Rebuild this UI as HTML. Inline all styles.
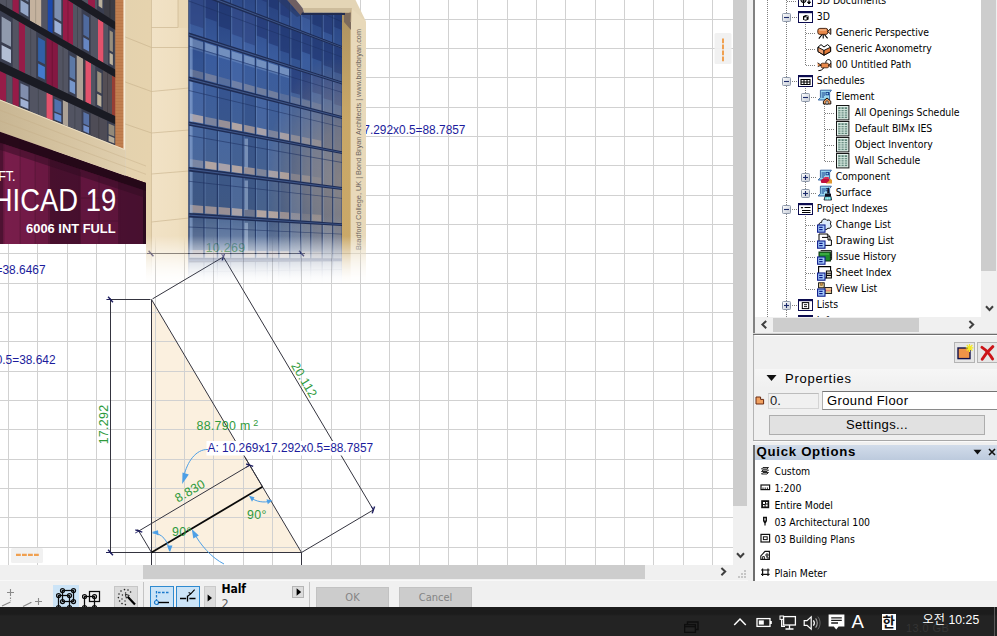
<!DOCTYPE html>
<html lang="en"><head><meta charset="utf-8"><title>ARCHICAD 19</title>
<style>
html,body{margin:0;padding:0;background:#f0f0f0;}
body{width:997px;height:636px;overflow:hidden;font-family:"DejaVu Sans Condensed","Liberation Sans",sans-serif;font-size:11px;color:#000;}
#root{position:relative;width:997px;height:636px;overflow:hidden;background:#f0f0f0;}
.abs{position:absolute;}
svg{display:block;}
#canvas{position:absolute;left:0;top:0;width:733px;height:565px;background:#fff;overflow:hidden;}
#vscroll{position:absolute;left:733px;top:0;width:15px;height:565px;background:#f0f0f0;}
#vscroll .thumb{position:absolute;left:0;top:0;width:14px;height:506px;background:#cdcdcd;}
#hscroll{position:absolute;left:0;top:565px;width:733px;height:16px;background:#f0f0f0;}
#hscroll .thumb{position:absolute;left:143px;top:0px;width:502px;height:14px;background:#cdcdcd;}
#taskbar{position:absolute;left:0;top:607px;width:997px;height:29px;background:linear-gradient(#1c1c1c 0,#1c1c1c 7px,#232323 9px,#232323 100%);}
.tree{position:absolute;left:755px;top:0;width:226px;height:317px;background:#fff;overflow:hidden;}
.trow{position:absolute;left:0;height:16px;line-height:16px;white-space:nowrap;font-size:11px;color:#000;}
.trow{font-size:10.4px;}

</style></head>
<body>
<div id="root">
<div id="canvas"><svg id="cv" width="733" height="565" viewBox="0 0 733 565" font-family="Liberation Sans, sans-serif">
<rect width="100%" height="100%" fill="#fff"/>
<polygon points="151.5,299.5 151.5,552.5 301.5,552.5" fill="#fbf0df"/>
<path d="M8.5 0V565M37.5 0V565M67.5 0V565M96.5 0V565M125.5 0V565M155.5 0V565M184.5 0V565M213.5 0V565M243.5 0V565M272.5 0V565M301.5 0V565M331.5 0V565M360.5 0V565M389.5 0V565M419.5 0V565M448.5 0V565M477.5 0V565M507.5 0V565M536.5 0V565M565.5 0V565M595.5 0V565M624.5 0V565M653.5 0V565M683.5 0V565M712.5 0V565M0 19.5H733M0 48.5H733M0 77.5H733M0 107.5H733M0 136.5H733M0 165.5H733M0 195.5H733M0 224.5H733M0 253.5H733M0 283.5H733M0 312.5H733M0 341.5H733M0 371.5H733M0 400.5H733M0 429.5H733M0 459.5H733M0 488.5H733M0 517.5H733M0 547.5H733" stroke="#d1d1d1" stroke-width="1" fill="none" shape-rendering="crispEdges"/>
<text x="465.5" y="134" text-anchor="end" font-size="11.9" fill="#1c1c9c">17.292x0.5=88.7857</text>
<g stroke="#34343f" stroke-width="1" fill="none">
<path d="M151.5 299.5L301.5 552.5"/>
<path d="M151.5 299.5V565M301.5 552.5V565"/>
<path d="M106 552.5H301.5"/>
<path d="M107 299.5H150.5"/>
<path d="M110.5 298.5V553.5"/>
<path d="M147 253.5H305"/>
<path d="M152.5 298.9L223.4 256.9L373.4 509.9L301.5 552.5"/>
<path d="M138.8 531.0L249.7 465.2"/>
<path d="M151.5 552.5L137.7 529.3M262.5 486.7L245.1 457.5"/>
</g>
<path d="M151.5 552.5L262.5 486.7" stroke="#0a0a0a" stroke-width="1.8"/>
<g transform="translate(110.5 299.5) rotate(0)" stroke="#1c1c60" fill="none"><path d="M-2.4 -2.8L2.4 2.8" stroke-width="1.4"/><path d="M-4.2 0H0" stroke-width="1" stroke-opacity=".8"/></g>
<g transform="translate(110.5 552.5) rotate(0)" stroke="#1c1c60" fill="none"><path d="M-2.4 -2.8L2.4 2.8" stroke-width="1.4"/><path d="M-4.2 0H0" stroke-width="1" stroke-opacity=".8"/></g>
<g transform="translate(151.0 253.5) rotate(0)" stroke="#1c1c60" fill="none"><path d="M-2.4 -2.8L2.4 2.8" stroke-width="1.4"/><path d="M-4.2 0H0" stroke-width="1" stroke-opacity=".8"/></g>
<g transform="translate(301.5 253.5) rotate(0)" stroke="#1c1c60" fill="none"><path d="M-2.4 -2.8L2.4 2.8" stroke-width="1.4"/><path d="M-4.2 0H0" stroke-width="1" stroke-opacity=".8"/></g>
<g transform="translate(223.4 256.9) rotate(59.336918267924595)" stroke="#1c1c60" fill="none"><path d="M-2.4 -2.8L2.4 2.8" stroke-width="1.4"/><path d="M-4.2 0H0" stroke-width="1" stroke-opacity=".8"/></g>
<g transform="translate(373.4 509.9) rotate(59.336918267924595)" stroke="#1c1c60" fill="none"><path d="M-2.4 -2.8L2.4 2.8" stroke-width="1.4"/><path d="M-4.2 0H0" stroke-width="1" stroke-opacity=".8"/></g>
<g transform="translate(138.8 531.0) rotate(-30.663081732075412)" stroke="#1c1c60" fill="none"><path d="M-2.4 -2.8L2.4 2.8" stroke-width="1.4"/><path d="M-4.2 0H0" stroke-width="1" stroke-opacity=".8"/></g>
<g transform="translate(249.7 465.2) rotate(-30.663081732075412)" stroke="#1c1c60" fill="none"><path d="M-2.4 -2.8L2.4 2.8" stroke-width="1.4"/><path d="M-4.2 0H0" stroke-width="1" stroke-opacity=".8"/></g>
<g fill="#2f9a3c" font-size="12.4" letter-spacing=".3">
<text x="225.5" y="251.5" text-anchor="middle">10.269</text>
<text transform="translate(107.5 424.5) rotate(-90)" text-anchor="middle">17.292</text>
<text transform="translate(300.6 382.1) rotate(59.34)" text-anchor="middle">20.112</text>
<text transform="translate(192.1 494.5) rotate(-30.66)" text-anchor="middle">8.830</text>
<text x="196.5" y="429.5">88.790 m <tspan font-size="9" dy="-4" dx="-1">2</tspan></text>
<text x="172" y="536">90°</text>
<text x="247" y="519">90°</text>
</g>
<rect x="206.5" y="441" width="168" height="14.5" fill="#fff"/>
<text x="207.5" y="452" font-size="11.9" fill="#1c1c9c">A: 10.269x17.292x0.5=88.7857</text>
<text x="45.5" y="274" text-anchor="end" font-size="11.9" fill="#1c1c9c">=38.6467</text>
<text x="55.5" y="364" text-anchor="end" font-size="11.9" fill="#1c1c9c">0.5=38.642</text>
<g stroke="#4d9fe6" stroke-width="1" fill="none">
<path d="M208 449.5C196 449 187 462 184 476"/>
<path d="M152.5 533C162 533 168 541 169.5 551"/>
<path d="M250 497C256 502 264 503 271 501"/>
<path d="M193 531C200 545 212 558 224 564"/>
</g>
<g fill="#4d9fe6">
<path d="M182.2 484L182.5 472.5L188.8 474.5Z"/>
<path d="M152 532L158 530.2L158.5 535.5Z"/>
<path d="M170 552.3L167 545.5L172.4 545.5Z"/>
<path d="M249 495.8L254.5 497.2L252 501.8Z"/>
<path d="M272.2 500.6L266.5 499.2L267.8 504.2Z"/>
<path d="M191.8 529L198.8 535.5L193.3 538.6Z"/>
</g>
<defs><linearGradient id="fade" x1="0" y1="0" x2="0" y2="1" gradientUnits="userSpaceOnUse"><stop offset="0" stop-color="#fff"/><stop offset="1" stop-color="#fff"/></linearGradient><linearGradient id="fm" gradientUnits="userSpaceOnUse" x1="0" y1="236" x2="0" y2="284"><stop offset="0" stop-color="#fff"/><stop offset=".167" stop-color="#bfbfbf"/><stop offset=".29" stop-color="#949494"/><stop offset=".417" stop-color="#666"/><stop offset=".5625" stop-color="#3d3d3d"/><stop offset=".708" stop-color="#1f1f1f"/><stop offset=".854" stop-color="#0a0a0a"/><stop offset="1" stop-color="#000"/></linearGradient><mask id="mR" maskUnits="userSpaceOnUse" x="0" y="0" width="400" height="300"><rect x="0" y="0" width="400" height="300" fill="url(#fm)"/></mask><clipPath id="cL"><polygon points="0,0 146,0 146,244 0,244"/></clipPath><clipPath id="cP"><polygon points="0,131.7 146,183.0 146,244 0,244"/></clipPath><clipPath id="cR"><polygon points="146,0 355.5,0 366,21.6 366,300 146,300"/></clipPath><linearGradient id="pur" x1="0" y1="0" x2="1" y2="0"><stop offset="0" stop-color="#6e1a44"/><stop offset=".35" stop-color="#5a1438"/><stop offset=".6" stop-color="#55133a"/><stop offset="1" stop-color="#4a1030"/></linearGradient><linearGradient id="bnd" x1="0" y1="0" x2="1" y2="0"><stop offset="0" stop-color="#c8b693"/><stop offset=".5" stop-color="#d5c3a0"/><stop offset="1" stop-color="#e0cfae"/></linearGradient><linearGradient id="coll" x1="0" y1="0" x2="1" y2="0"><stop offset="0" stop-color="#e4d2ae"/><stop offset="1" stop-color="#e6d3ae"/></linearGradient><linearGradient id="colr" x1="0" y1="0" x2="1" y2="0"><stop offset="0" stop-color="#f1e2c6"/><stop offset=".7" stop-color="#efdfc0"/><stop offset="1" stop-color="#ead8b6"/></linearGradient><linearGradient id="rs" x1="0" y1="0" x2="0" y2="1"><stop offset="0" stop-color="#8a7a5c" stop-opacity=".5"/><stop offset=".4" stop-color="#c9a868" stop-opacity=".4"/><stop offset="1" stop-color="#d0b070" stop-opacity=".3"/></linearGradient><pattern id="brk" width="8.2" height="3" patternUnits="userSpaceOnUse" x="115.5"><rect width="8.2" height="3" fill="#c07f50"/><rect y="2.5" width="8.2" height=".5" fill="#a8683c" opacity=".6"/></pattern></defs><g id="photo"><g clip-path="url(#cL)"><rect x="0" y="0" width="116" height="150" fill="#343642"/><polygon points="60.0,-60.0 88.0,-60.0 88.0,4.3 60.0,-13.6" fill="#525462"/><polygon points="73.6,-60.0 74.4,-60.0 74.4,-4.4 73.6,-4.9" fill="#41434e"/><polygon points="88.0,-60.0 95.0,-60.0 95.0,8.8 88.0,4.3" fill="#961c48"/><polygon points="95.0,-60.0 97.0,-60.0 97.0,10.1 95.0,8.8" fill="#525462"/><polygon points="97.0,-60.0 104.0,-60.0 104.0,14.5 97.0,10.1" fill="#3a3e50"/><polygon points="98.6,-52.9 102.4,-52.6 102.4,-15.9 98.6,-17.4" fill="#978e7d"/><polygon points="98.6,-13.1 102.4,-11.5 102.4,8.4 98.6,6.1" fill="#bab09c"/><polygon points="104.0,-60.0 116.0,-60.0 116.0,22.2 104.0,14.5" fill="#3c3c44"/><polygon points="109.6,-60.0 110.4,-60.0 110.4,18.6 109.6,18.1" fill="#303036"/><polygon points="0.0,-42.5 12.6,-34.6 12.6,10.7 0.0,3.5" fill="#525462"/><polygon points="5.9,-38.8 6.7,-38.3 6.7,7.3 5.9,6.9" fill="#41434e"/><polygon points="12.6,-34.6 18.9,-30.6 18.9,14.3 12.6,10.7" fill="#961c48"/><polygon points="18.9,-30.6 30.0,-23.7 30.0,20.7 18.9,14.3" fill="#3a3e50"/><polygon points="20.5,-25.2 28.4,-20.2 28.4,2.0 20.5,-2.7" fill="#7686a3"/><polygon points="20.5,-0.0 28.4,4.7 28.4,16.7 20.5,12.1" fill="#94a6c8"/><polygon points="30.0,-23.7 41.5,-16.5 41.5,27.3 30.0,20.7" fill="#c4b29e"/><polygon points="35.4,-20.3 36.1,-19.8 36.1,24.2 35.4,23.8" fill="#9c8e7e"/><polygon points="41.5,-16.5 47.8,-12.5 47.8,30.9 41.5,27.3" fill="#525462"/><polygon points="47.8,-12.5 52.8,-9.4 52.8,33.8 47.8,30.9" fill="#1c48ac"/><polygon points="52.8,-9.4 62.9,-3.1 62.9,39.5 52.8,33.8" fill="#3a3e50"/><polygon points="54.4,-4.1 61.3,0.2 61.3,21.5 54.4,17.4" fill="#7d8eaf"/><polygon points="54.4,20.0 61.3,24.1 61.3,35.6 54.4,31.7" fill="#9cb0d6"/><polygon points="62.9,-3.1 73.0,3.2 73.0,45.3 62.9,39.5" fill="#961c48"/><polygon points="67.5,-0.2 68.4,0.3 68.4,42.7 67.5,42.2" fill="#781639"/><polygon points="73.0,3.2 81.8,8.8 81.8,50.4 73.0,45.3" fill="#525462"/><polygon points="77.0,5.8 77.8,6.3 77.8,48.1 77.0,47.6" fill="#41434e"/><polygon points="81.8,8.8 90.6,14.3 90.6,55.4 81.8,50.4" fill="#3a3e50"/><polygon points="83.4,13.9 89.0,17.4 89.0,38.0 83.4,34.7" fill="#4f6a9e"/><polygon points="83.4,37.2 89.0,40.5 89.0,51.6 83.4,48.4" fill="#6686c2"/><polygon points="90.6,14.3 98.0,18.9 98.0,59.7 90.6,55.4" fill="#525462"/><polygon points="98.0,18.9 103.6,22.4 103.6,62.9 98.0,59.7" fill="#e2526c"/><polygon points="103.6,22.4 108.0,25.2 108.0,65.4 103.6,62.9" fill="#525462"/><polygon points="108.0,25.2 114.5,29.2 114.5,69.1 108.0,65.4" fill="#3a3e50"/><polygon points="109.6,30.2 112.9,32.2 112.9,52.2 109.6,50.3" fill="#978e7d"/><polygon points="109.6,52.7 112.9,54.6 112.9,65.4 109.6,63.5" fill="#bab09c"/><polygon points="114.5,29.2 116.0,30.2 116.0,70.0 114.5,69.1" fill="#525462"/><polygon points="0.0,10.5 12.6,17.8 12.6,67.5 0.0,61.5" fill="#3a3e50"/><polygon points="1.6,16.5 11.0,21.9 11.0,46.8 1.6,41.9" fill="#909aad"/><polygon points="1.6,45.0 11.0,49.8 11.0,63.2 1.6,58.7" fill="#b2bed4"/><polygon points="12.6,17.8 18.9,21.4 18.9,70.5 12.6,67.5" fill="#525462"/><polygon points="18.9,21.4 25.0,25.0 25.0,73.4 18.9,70.5" fill="#961c48"/><polygon points="25.0,25.0 36.5,31.6 36.5,78.9 25.0,73.4" fill="#525462"/><polygon points="30.4,28.1 31.1,28.5 31.1,76.3 30.4,75.9" fill="#41434e"/><polygon points="36.5,31.6 46.5,37.4 46.5,83.6 36.5,78.9" fill="#3a3e50"/><polygon points="38.1,37.3 44.9,41.1 44.9,64.3 38.1,60.8" fill="#3160a6"/><polygon points="38.1,63.6 44.9,67.1 44.9,79.6 38.1,76.3" fill="#447acc"/><polygon points="46.5,37.4 57.9,44.0 57.9,89.0 46.5,83.6" fill="#841842"/><polygon points="51.8,40.5 52.6,41.0 52.6,86.5 51.8,86.1" fill="#691334"/><polygon points="57.9,44.0 68.0,49.9 68.0,93.8 57.9,89.0" fill="#525462"/><polygon points="62.6,46.7 63.4,47.2 63.4,91.6 62.6,91.2" fill="#41434e"/><polygon points="68.0,49.9 76.7,54.9 76.7,98.0 68.0,93.8" fill="#3a3e50"/><polygon points="69.6,55.2 75.1,58.3 75.1,79.9 69.6,77.1" fill="#5c78a5"/><polygon points="69.6,79.7 75.1,82.5 75.1,94.2 69.6,91.5" fill="#7696ca"/><polygon points="76.7,54.9 83.0,58.6 83.0,101.0 76.7,98.0" fill="#aca296"/><polygon points="83.0,58.6 85.5,60.0 85.5,102.1 83.0,101.0" fill="#3c3c46"/><polygon points="85.5,60.0 91.0,63.2 91.0,104.8 85.5,102.1" fill="#e2526c"/><polygon points="91.0,63.2 95.6,65.9 95.6,106.9 91.0,104.8" fill="#525462"/><polygon points="95.6,65.9 103.0,70.1 103.0,110.5 95.6,106.9" fill="#3a3e50"/><polygon points="97.2,70.9 101.4,73.3 101.4,93.5 97.2,91.3" fill="#99907d"/><polygon points="97.2,93.8 101.4,95.9 101.4,106.9 97.2,104.8" fill="#bcb29c"/><polygon points="103.0,70.1 112.0,75.4 112.0,114.7 103.0,110.5" fill="#544e54"/><polygon points="107.1,72.5 107.9,73.0 107.9,112.8 107.1,112.4" fill="#433e43"/><polygon points="112.0,75.4 116.0,77.7 116.0,116.6 112.0,114.7" fill="#963e34"/><polygon points="0.0,71.0 6.3,73.9 6.3,102.1 0.0,99.6" fill="#961c48"/><polygon points="6.3,73.9 12.6,76.8 12.6,104.6 6.3,102.1" fill="#525462"/><polygon points="12.6,76.8 18.9,79.7 18.9,107.1 12.6,104.6" fill="#961c48"/><polygon points="18.9,79.7 30.0,84.9 30.0,111.5 18.9,107.1" fill="#3a3e50"/><polygon points="20.5,83.2 28.4,86.8 28.4,100.2 20.5,96.8" fill="#818ead"/><polygon points="20.5,98.5 28.4,101.8 28.4,109.0 20.5,105.8" fill="#a0b0d4"/><polygon points="30.0,84.9 46.5,92.5 46.5,118.1 30.0,111.5" fill="#525462"/><polygon points="37.9,88.5 38.6,88.9 38.6,115.0 37.9,114.7" fill="#41434e"/><polygon points="46.5,92.5 52.8,95.4 52.8,120.6 46.5,118.1" fill="#e2526c"/><polygon points="52.8,95.4 62.9,100.1 62.9,124.6 52.8,120.6" fill="#3a3e50"/><polygon points="54.4,98.7 61.3,101.8 61.3,114.1 54.4,111.2" fill="#4f71ac"/><polygon points="54.4,112.7 61.3,115.6 61.3,122.3 54.4,119.5" fill="#668ed2"/><polygon points="62.9,100.1 68.0,102.4 68.0,126.6 62.9,124.6" fill="#aca296"/><polygon points="68.0,102.4 81.8,108.8 81.8,132.1 68.0,126.6" fill="#525462"/><polygon points="74.5,105.4 75.3,105.8 75.3,129.6 74.5,129.2" fill="#41434e"/><polygon points="81.8,108.8 90.6,112.9 90.6,135.6 81.8,132.1" fill="#3a3e50"/><polygon points="83.4,111.9 89.0,114.4 89.0,125.9 83.4,123.5" fill="#5771a5"/><polygon points="83.4,124.9 89.0,127.2 89.0,133.4 83.4,131.1" fill="#708eca"/><polygon points="90.6,112.9 107.0,120.5 107.0,142.2 90.6,135.6" fill="#4e4c56"/><polygon points="98.4,116.5 99.2,116.9 99.2,139.1 98.4,138.7" fill="#3e3c44"/><polygon points="107.0,120.5 116.0,124.6 116.0,145.7 107.0,142.2" fill="#3a3e50"/><polygon points="108.6,123.4 114.4,126.0 114.4,136.6 108.6,134.2" fill="#92897a"/><polygon points="108.6,135.5 114.4,137.9 114.4,143.6 108.6,141.3" fill="#b4aa98"/><polygon points="60.0,-13.6 116.0,22.2 116.0,30.2 60.0,-4.9" fill="#1a1b23"/><polygon points="0.0,3.5 116.0,70.0 116.0,77.7 0.0,10.5" fill="#1a1b23"/><polygon points="0.0,61.5 116.0,116.6 116.0,124.6 0.0,71.0" fill="#1a1b23"/><rect x="115.5" y="0" width="8.2" height="150" fill="#c07f50"/><rect x="115.5" y="0" width="8.2" height="150" fill="url(#brk)"/><rect x="123.5" y="0" width="2" height="150" fill="#f7ecd6"/><rect x="125.3" y="0" width="26.4" height="300" fill="url(#coll)"/><rect x="151.5" y="0" width="37.3" height="300" fill="url(#colr)"/><rect x="178" y="0" width="10.8" height="28" fill="#e9d7b4"/><g stroke="#c9b48e" stroke-width=".8" fill="none" opacity=".8"><path d="M125.3 37L151.5 47.5L188.8 47.5"/><path d="M125.3 82L151.5 91.5L188.8 88"/><path d="M125.3 124L151.5 133L188.8 130"/><path d="M151.5 174L188.8 171"/><path d="M151.5 222L188.8 218"/><path d="M151.5 27.5L178 27.5V0"/></g><rect x="151.1" y="0" width=".9" height="300" fill="#cdb892" opacity=".8"/><g clip-path="url(#cP)"><rect x="0" y="125" width="146" height="119" fill="url(#pur)"/><rect x="0" y="140" width="3.2" height="104" fill="#4e1232" opacity="1"/><rect x="4.8" y="140" width="14.7" height="104" fill="#7a1e4c" opacity="0.85"/><rect x="21" y="140" width="13.5" height="104" fill="#761c4a" opacity="0.8"/><rect x="36" y="140" width="12" height="104" fill="#701a46" opacity="0.7"/><rect x="50" y="140" width="30" height="104" fill="#400e2a" opacity="0.7"/><rect x="80.5" y="140" width="38.0" height="104" fill="#6c1a44" opacity="0.55"/><rect x="119.5" y="140" width="23.5" height="104" fill="#46102e" opacity="0.6"/><rect x="143" y="140" width="3" height="104" fill="#28091b" opacity="0.85"/><g stroke="#4a1030" stroke-width="1" opacity=".7"><path d="M80.5 172V244M99 176V244M118.5 182V244M80.5 198H118.5M80.5 221H118.5"/></g></g><polygon points="0.0,131.7 151.0,184.7 151.0,192.7 0.0,142.7" fill="#240818" opacity="0.97"/><polygon points="0.0,142.7 151.0,192.7 151.0,199.7 0.0,149.7" fill="#320c22" opacity="0.5"/><polygon points="0,99.6 125.3,149.4 125.3,175.7 0,131.7" fill="url(#bnd)"/><path d="M0 110.2L150 167.6" stroke="#c4ad86" stroke-width=".7" opacity=".6"/><path d="M0 120.8L150 175.8" stroke="#c4ad86" stroke-width=".7" opacity=".6"/><path d="M0 100.1L125.3 149.9" stroke="#f3e6cc" stroke-width="1" opacity=".8"/><g fill="#fff" font-family="Liberation Sans, sans-serif"><text transform="translate(116.2 211) scale(.868 1)" text-anchor="end" font-size="31.6">HICAD 19</text><text x="115.6" y="232.6" text-anchor="end" font-size="12.9" font-weight="bold">6006 INT FULL</text><text transform="translate(15.6 180.8) scale(.9 1)" text-anchor="end" font-size="14">FT.</text></g></g><g clip-path="url(#cR)"><g mask="url(#mR)"><rect x="115.5" y="0" width="8.2" height="150" fill="#c07f50"/><rect x="115.5" y="0" width="8.2" height="150" fill="url(#brk)"/><rect x="123.5" y="0" width="2" height="150" fill="#f7ecd6"/><rect x="125.3" y="0" width="26.4" height="300" fill="url(#coll)"/><rect x="151.5" y="0" width="37.3" height="300" fill="url(#colr)"/><rect x="178" y="0" width="10.8" height="28" fill="#e9d7b4"/><g stroke="#c9b48e" stroke-width=".8" fill="none" opacity=".8"><path d="M125.3 37L151.5 47.5L188.8 47.5"/><path d="M125.3 82L151.5 91.5L188.8 88"/><path d="M125.3 124L151.5 133L188.8 130"/><path d="M151.5 174L188.8 171"/><path d="M151.5 222L188.8 218"/><path d="M151.5 27.5L178 27.5V0"/></g><rect x="151.1" y="0" width=".9" height="300" fill="#cdb892" opacity=".8"/><defs><linearGradient id="gg" x1="0" y1="0" x2="0" y2="1"><stop offset="0" stop-color="#2d4988"/><stop offset=".2" stop-color="#3a5c9e"/><stop offset=".45" stop-color="#416096"/><stop offset=".7" stop-color="#48628c"/><stop offset="1" stop-color="#52688a"/></linearGradient><radialGradient id="gtan" gradientUnits="userSpaceOnUse" cx="340" cy="180" r="125" gradientTransform="translate(340 180) scale(.6 1) translate(-340 -180)"><stop offset="0" stop-color="#a89684" stop-opacity=".66"/><stop offset=".4" stop-color="#a49282" stop-opacity=".52"/><stop offset=".7" stop-color="#a09084" stop-opacity=".26"/><stop offset="1" stop-color="#9a8c84" stop-opacity="0"/></radialGradient><linearGradient id="gwash" x1="0" y1="0" x2="0" y2="1"><stop offset="0" stop-color="#dfe6f0" stop-opacity="0"/><stop offset=".5" stop-color="#dfe6f0" stop-opacity=".3"/><stop offset="1" stop-color="#dfe6f0" stop-opacity=".45"/></linearGradient></defs><rect x="188.8" y="0" width="153.2" height="300" fill="url(#gg)"/><polygon points="189.8,-54.0 203.4,-47.9 203.4,-27.2 189.8,-32.8" fill="#213470" opacity="0.6"/><polygon points="205.0,-47.2 216.8,-42.0 216.8,-18.1 205.0,-22.9" fill="#213470" opacity="0.6"/><polygon points="218.4,-41.3 230.1,-36.1 230.1,-9.1 218.4,-13.8" fill="#213470" opacity="0.6"/><polygon points="217.4,-45.2 230.7,-39.2 230.7,3.1 217.4,-2.0" fill="#6e96d7" opacity="0.14"/><polygon points="231.7,-35.4 242.4,-30.6 242.4,-0.7 231.7,-4.9" fill="#213470" opacity="0.6"/><polygon points="244.0,-29.9 254.9,-25.1 254.9,-5.9 244.0,-10.4" fill="#213470" opacity="0.6"/><polygon points="256.5,-24.4 266.7,-19.9 266.7,2.3 256.5,-1.9" fill="#213470" opacity="0.6"/><polygon points="268.3,-19.2 278.2,-14.8 278.2,10.3 268.3,6.3" fill="#213470" opacity="0.6"/><polygon points="267.3,-22.8 278.8,-17.6 278.8,21.6 267.3,17.2" fill="#14285a" opacity="0.16"/><polygon points="279.8,-14.1 289.2,-9.9 289.2,17.9 279.8,14.2" fill="#213470" opacity="0.6"/><polygon points="290.8,-9.2 300.1,-5.1 300.1,12.8 290.8,8.9" fill="#213470" opacity="0.6"/><polygon points="301.7,-4.3 310.2,-0.6 310.2,20.1 301.7,16.6" fill="#213470" opacity="0.6"/><polygon points="300.7,-7.8 310.8,-3.3 310.8,34.0 300.7,30.1" fill="#6e96d7" opacity="0.14"/><polygon points="311.8,0.1 321.6,4.5 321.6,27.8 311.8,23.8" fill="#213470" opacity="0.6"/><polygon points="310.8,-3.3 322.2,1.8 322.2,38.4 310.8,34.0" fill="#14285a" opacity="0.16"/><polygon points="323.2,5.2 332.1,9.1 332.1,35.0 323.2,31.4" fill="#213470" opacity="0.6"/><polygon points="333.7,9.8 341.6,13.3 341.6,29.9 333.7,26.7" fill="#213470" opacity="0.6"/><polygon points="332.7,6.5 342.2,10.8 342.2,46.0 332.7,42.4" fill="#14285a" opacity="0.16"/><polygon points="189.8,-9.0 203.4,-3.8 203.4,28.2 189.8,23.7" fill="#213470" opacity="0.6"/><polygon points="188.8,-13.0 204.0,-7.1 204.0,37.3 188.8,32.4" fill="#6e96d7" opacity="0.14"/><polygon points="205.0,-3.2 216.8,1.3 216.8,21.8 205.0,17.6" fill="#213470" opacity="0.6"/><polygon points="218.4,1.9 230.1,6.3 230.1,30.0 218.4,25.9" fill="#213470" opacity="0.6"/><polygon points="217.4,-2.0 230.7,3.1 230.7,45.8 217.4,41.6" fill="#14285a" opacity="0.16"/><polygon points="231.7,6.9 242.4,11.0 242.4,37.7 231.7,34.1" fill="#213470" opacity="0.6"/><polygon points="230.7,3.1 243.0,7.9 243.0,49.8 230.7,45.8" fill="#6e96d7" opacity="0.14"/><polygon points="244.0,11.6 254.9,15.7 254.9,45.4 244.0,41.7" fill="#213470" opacity="0.6"/><polygon points="243.0,7.9 255.5,12.7 255.5,53.8 243.0,49.8" fill="#6e96d7" opacity="0.14"/><polygon points="256.5,16.3 266.7,20.2 266.7,39.2 256.5,35.6" fill="#213470" opacity="0.6"/><polygon points="268.3,20.8 278.2,24.6 278.2,46.5 268.3,43.1" fill="#213470" opacity="0.6"/><polygon points="279.8,25.2 289.2,28.8 289.2,53.6 279.8,50.4" fill="#213470" opacity="0.6"/><polygon points="278.8,21.6 289.8,25.9 289.8,64.8 278.8,61.3" fill="#14285a" opacity="0.16"/><polygon points="290.8,29.4 300.1,32.9 300.1,60.5 290.8,57.4" fill="#213470" opacity="0.6"/><polygon points="289.8,25.9 300.7,30.1 300.7,68.3 289.8,64.8" fill="#14285a" opacity="0.16"/><polygon points="301.7,33.5 310.2,36.7 310.2,54.4 301.7,51.5" fill="#213470" opacity="0.6"/><polygon points="311.8,37.3 321.6,41.1 321.6,61.5 311.8,58.1" fill="#213470" opacity="0.6"/><polygon points="310.8,34.0 322.2,38.4 322.2,75.2 310.8,71.6" fill="#14285a" opacity="0.16"/><polygon points="323.2,41.7 332.1,45.1 332.1,68.1 323.2,65.1" fill="#213470" opacity="0.6"/><polygon points="322.2,38.4 332.7,42.4 332.7,78.6 322.2,75.2" fill="#14285a" opacity="0.16"/><polygon points="333.7,45.7 341.6,48.7 341.6,74.3 333.7,71.7" fill="#213470" opacity="0.6"/><polygon points="332.7,42.4 342.2,46.0 342.2,81.6 332.7,78.6" fill="#14285a" opacity="0.16"/><polygon points="190.0,38.1 203.2,42.2 203.2,50.0 190.0,46.0" fill="#96b0d4" opacity="0.62"/><polygon points="190.0,46.0 203.2,50.0 203.2,52.6 190.0,48.6" fill="#7896c8" opacity="0.45"/><polygon points="189.9,68.9 203.3,72.5 203.3,79.6 189.9,76.1" fill="#c4b0a4" opacity="0.3825"/><polygon points="188.8,32.4 204.0,37.3 204.0,80.4 188.8,76.5" fill="#14285a" opacity="0.16"/><polygon points="205.2,42.8 216.6,46.4 216.6,54.0 205.2,50.6" fill="#96b0d4" opacity="0.62"/><polygon points="205.2,50.6 216.6,54.0 216.6,56.6 205.2,53.2" fill="#7896c8" opacity="0.45"/><polygon points="205.1,73.0 216.7,76.1 216.7,83.1 205.1,80.1" fill="#c4b0a4" opacity="0.3825"/><polygon points="218.6,47.0 229.9,50.6 229.9,58.1 218.6,54.6" fill="#96b0d4" opacity="0.62"/><polygon points="218.6,54.6 229.9,58.1 229.9,60.5 218.6,57.2" fill="#7896c8" opacity="0.45"/><polygon points="218.5,76.6 230.0,79.7 230.0,86.5 218.5,83.6" fill="#c4b0a4" opacity="0.2025"/><polygon points="231.9,51.2 242.2,54.4 242.2,61.8 231.9,58.7" fill="#96b0d4" opacity="0.62"/><polygon points="231.9,58.7 242.2,61.8 242.2,64.2 231.9,61.1" fill="#7896c8" opacity="0.45"/><polygon points="231.8,80.2 242.3,83.0 242.3,89.7 231.8,87.0" fill="#c4b0a4" opacity="0.3825"/><polygon points="230.7,45.8 243.0,49.8 243.0,90.5 230.7,87.3" fill="#6e96d7" opacity="0.14"/><polygon points="244.2,55.1 254.7,58.3 254.7,65.5 244.2,62.4" fill="#96b0d4" opacity="0.62"/><polygon points="244.2,62.4 254.7,65.5 254.7,67.9 244.2,64.8" fill="#7896c8" opacity="0.45"/><polygon points="244.1,83.5 254.8,86.4 254.8,93.0 244.1,90.2" fill="#c4b0a4" opacity="0.3825"/><polygon points="256.7,59.0 266.5,62.0 266.5,69.1 256.7,66.2" fill="#96b0d4" opacity="0.62"/><polygon points="256.7,66.2 266.5,69.1 266.5,71.5 256.7,68.5" fill="#7896c8" opacity="0.45"/><polygon points="256.6,86.9 266.6,89.6 266.6,96.0 256.6,93.4" fill="#c4b0a4" opacity="0.3825"/><polygon points="268.5,62.7 278.0,65.7 278.0,72.6 268.5,69.7" fill="#96b0d4" opacity="0.62"/><polygon points="268.5,69.7 278.0,72.6 278.0,74.9 268.5,72.1" fill="#7896c8" opacity="0.45"/><polygon points="268.4,90.0 278.1,92.7 278.1,99.0 268.4,96.5" fill="#c4b0a4" opacity="0.3825"/><polygon points="280.0,66.3 289.0,69.1 289.0,75.9 280.0,73.2" fill="#96b0d4" opacity="0.62"/><polygon points="280.0,73.2 289.0,75.9 289.0,78.2 280.0,75.5" fill="#7896c8" opacity="0.45"/><polygon points="279.9,93.2 289.1,95.6 289.1,101.9 279.9,99.5" fill="#c4b0a4" opacity="0.2025"/><polygon points="290.8,68.2 300.1,71.1 300.1,94.8 290.8,92.2" fill="#213470" opacity="0.6"/><polygon points="290.9,96.1 300.0,98.6 300.0,104.7 290.9,102.4" fill="#c4b0a4" opacity="0.2295"/><polygon points="301.7,71.6 310.2,74.3 310.2,100.6 301.7,98.3" fill="#213470" opacity="0.6"/><polygon points="301.8,99.1 310.1,101.3 310.1,107.3 301.8,105.2" fill="#c4b0a4" opacity="0.2295"/><polygon points="311.8,74.8 321.6,77.9 321.6,94.7 311.8,91.9" fill="#213470" opacity="0.6"/><polygon points="311.9,101.8 321.5,104.4 321.5,110.3 311.9,107.8" fill="#c4b0a4" opacity="0.2295"/><polygon points="310.8,71.6 322.2,75.2 322.2,111.0 310.8,108.1" fill="#6e96d7" opacity="0.14"/><polygon points="323.2,78.4 332.1,81.2 332.1,100.7 323.2,98.2" fill="#213470" opacity="0.6"/><polygon points="322.2,75.2 332.7,78.6 332.7,113.7 322.2,111.0" fill="#6e96d7" opacity="0.14"/><polygon points="333.7,81.7 341.6,84.2 341.6,106.2 333.7,104.0" fill="#213470" opacity="0.6"/><polygon points="332.7,78.6 342.2,81.6 342.2,116.2 332.7,113.7" fill="#6e96d7" opacity="0.14"/><polygon points="189.9,113.5 203.3,116.3 203.3,123.6 189.9,120.9" fill="#c4b0a4" opacity="0.85"/><polygon points="188.8,76.5 204.0,80.4 204.0,124.4 188.8,121.4" fill="#6e96d7" opacity="0.14"/><polygon points="205.1,116.7 216.7,119.1 216.7,126.2 205.1,123.9" fill="#c4b0a4" opacity="0.45"/><polygon points="218.5,119.5 230.0,121.8 230.0,128.8 218.5,126.6" fill="#c4b0a4" opacity="0.85"/><polygon points="217.4,83.9 230.7,87.3 230.7,129.6 217.4,127.0" fill="#14285a" opacity="0.16"/><polygon points="231.8,122.2 242.3,124.4 242.3,131.2 231.8,129.2" fill="#c4b0a4" opacity="0.85"/><polygon points="244.1,124.8 254.8,127.0 254.8,133.7 244.1,131.6" fill="#c4b0a4" opacity="0.85"/><polygon points="243.0,90.5 255.5,93.8 255.5,134.4 243.0,132.0" fill="#14285a" opacity="0.16"/><polygon points="256.6,127.3 266.6,129.4 266.6,136.0 256.6,134.0" fill="#c4b0a4" opacity="0.85"/><polygon points="255.5,93.8 267.3,96.8 267.3,136.7 255.5,134.4" fill="#6e96d7" opacity="0.14"/><polygon points="268.4,129.8 278.1,131.8 278.1,138.3 268.4,136.4" fill="#c4b0a4" opacity="0.45"/><polygon points="279.9,132.2 289.1,134.1 289.1,140.4 279.9,138.6" fill="#c4b0a4" opacity="0.85"/><polygon points="278.8,99.8 289.8,102.6 289.8,141.1 278.8,139.0" fill="#6e96d7" opacity="0.14"/><polygon points="290.9,134.4 300.0,136.3 300.0,142.6 290.9,140.8" fill="#c4b0a4" opacity="0.51"/><polygon points="301.8,136.7 310.1,138.4 310.1,144.5 301.8,142.9" fill="#c4b0a4" opacity="0.51"/><polygon points="300.7,105.5 310.8,108.1 310.8,145.2 300.7,143.3" fill="#6e96d7" opacity="0.14"/><polygon points="311.9,138.8 321.5,140.8 321.5,146.8 311.9,144.9" fill="#c4b0a4" opacity="0.51"/><polygon points="310.8,108.1 322.2,111.0 322.2,147.5 310.8,145.2" fill="#6e96d7" opacity="0.14"/><polygon points="322.2,111.0 332.7,113.7 332.7,149.5 322.2,147.5" fill="#14285a" opacity="0.16"/><polygon points="332.7,113.7 342.2,116.2 342.2,151.4 332.7,149.5" fill="#14285a" opacity="0.16"/><polygon points="189.9,158.9 203.3,160.9 203.3,168.2 189.9,166.5" fill="#c4b0a4" opacity="0.45"/><polygon points="188.8,121.4 204.0,124.4 204.0,169.0 188.8,167.0" fill="#6e96d7" opacity="0.14"/><polygon points="205.1,161.1 216.7,162.8 216.7,170.0 205.1,168.5" fill="#c4b0a4" opacity="0.85"/><polygon points="218.5,163.0 230.0,164.7 230.0,171.8 218.5,170.2" fill="#c4b0a4" opacity="0.85"/><polygon points="217.4,127.0 230.7,129.6 230.7,172.5 217.4,170.8" fill="#6e96d7" opacity="0.14"/><polygon points="231.8,164.9 242.3,166.4 242.3,173.4 231.8,172.0" fill="#c4b0a4" opacity="0.85"/><polygon points="244.1,166.7 254.8,168.2 254.8,175.0 244.1,173.6" fill="#c4b0a4" opacity="0.85"/><polygon points="243.0,132.0 255.5,134.4 255.5,175.7 243.0,174.1" fill="#14285a" opacity="0.16"/><polygon points="256.6,168.5 266.6,169.9 266.6,176.6 256.6,175.3" fill="#c4b0a4" opacity="0.45"/><polygon points="268.4,170.2 278.1,171.5 278.1,178.1 268.4,176.8" fill="#c4b0a4" opacity="0.85"/><polygon points="267.3,136.7 278.8,139.0 278.8,178.8 267.3,177.3" fill="#6e96d7" opacity="0.14"/><polygon points="279.9,171.8 289.1,173.1 289.1,179.6 279.9,178.4" fill="#c4b0a4" opacity="0.85"/><polygon points="290.9,173.4 300.0,174.7 300.0,181.0 290.9,179.8" fill="#c4b0a4" opacity="0.51"/><polygon points="289.8,141.1 300.7,143.3 300.7,181.7 289.8,180.2" fill="#14285a" opacity="0.16"/><polygon points="301.8,174.9 310.1,176.1 310.1,182.3 301.8,181.2" fill="#c4b0a4" opacity="0.51"/><polygon points="311.9,176.4 321.5,177.7 321.5,183.8 311.9,182.6" fill="#c4b0a4" opacity="0.27"/><polygon points="310.8,145.2 322.2,147.5 322.2,184.5 310.8,183.0" fill="#6e96d7" opacity="0.14"/><polygon points="322.2,147.5 332.7,149.5 332.7,185.9 322.2,184.5" fill="#6e96d7" opacity="0.14"/><polygon points="332.7,149.5 342.2,151.4 342.2,187.1 332.7,185.9" fill="#14285a" opacity="0.16"/><polygon points="189.9,204.8 203.3,205.9 203.3,213.3 189.9,212.4" fill="#c4b0a4" opacity="0.85"/><polygon points="188.8,167.0 204.0,169.0 204.0,214.0 188.8,213.0" fill="#14285a" opacity="0.16"/><polygon points="205.1,206.0 216.7,206.9 216.7,214.2 205.1,213.4" fill="#c4b0a4" opacity="0.85"/><polygon points="204.0,169.0 217.4,170.8 217.4,214.9 204.0,214.0" fill="#14285a" opacity="0.16"/><polygon points="218.5,207.0 230.0,207.9 230.0,215.1 218.5,214.3" fill="#c4b0a4" opacity="0.85"/><polygon points="217.4,170.8 230.7,172.5 230.7,215.8 217.4,214.9" fill="#14285a" opacity="0.16"/><polygon points="231.8,208.1 242.3,208.9 242.3,215.9 231.8,215.2" fill="#c4b0a4" opacity="0.85"/><polygon points="230.7,172.5 243.0,174.1 243.0,216.6 230.7,215.8" fill="#6e96d7" opacity="0.14"/><polygon points="244.1,209.0 254.8,209.9 254.8,216.7 244.1,216.0" fill="#c4b0a4" opacity="0.45"/><polygon points="243.0,174.1 255.5,175.7 255.5,217.4 243.0,216.6" fill="#14285a" opacity="0.16"/><polygon points="256.6,210.0 266.6,210.8 266.6,217.5 256.6,216.9" fill="#c4b0a4" opacity="0.85"/><polygon points="268.4,210.9 278.1,211.7 278.1,218.3 268.4,217.7" fill="#c4b0a4" opacity="0.85"/><polygon points="279.9,211.8 289.1,212.5 289.1,219.1 279.9,218.4" fill="#c4b0a4" opacity="0.85"/><polygon points="278.8,178.8 289.8,180.2 289.8,219.7 278.8,219.0" fill="#14285a" opacity="0.16"/><polygon points="290.9,212.7 300.0,213.4 300.0,219.8 290.9,219.2" fill="#c4b0a4" opacity="0.51"/><polygon points="289.8,180.2 300.7,181.7 300.7,220.4 289.8,219.7" fill="#6e96d7" opacity="0.14"/><polygon points="301.8,213.5 310.1,214.2 310.1,220.5 301.8,219.9" fill="#c4b0a4" opacity="0.27"/><polygon points="300.7,181.7 310.8,183.0 310.8,221.1 300.7,220.4" fill="#14285a" opacity="0.16"/><polygon points="311.9,214.3 321.5,215.1 321.5,221.2 311.9,220.6" fill="#c4b0a4" opacity="0.51"/><polygon points="322.2,184.5 332.7,185.9 332.7,222.5 322.2,221.8" fill="#14285a" opacity="0.16"/><polygon points="189.9,249.9 203.3,250.1 203.3,257.4 189.9,257.3" fill="#c4b0a4" opacity="0.85"/><polygon points="188.8,213.0 204.0,214.0 204.0,258.0 188.8,258.0" fill="#14285a" opacity="0.16"/><polygon points="205.1,250.1 216.7,250.3 216.7,257.4 205.1,257.4" fill="#c4b0a4" opacity="0.85"/><polygon points="218.5,250.3 230.0,250.5 230.0,257.5 218.5,257.4" fill="#c4b0a4" opacity="0.85"/><polygon points="217.4,214.9 230.7,215.8 230.7,258.1 217.4,258.1" fill="#6e96d7" opacity="0.14"/><polygon points="231.8,250.5 242.3,250.7 242.3,257.5 231.8,257.5" fill="#c4b0a4" opacity="0.45"/><polygon points="230.7,215.8 243.0,216.6 243.0,258.2 230.7,258.1" fill="#6e96d7" opacity="0.14"/><polygon points="244.1,250.7 254.8,250.8 254.8,257.6 244.1,257.5" fill="#c4b0a4" opacity="0.85"/><polygon points="256.6,250.9 266.6,251.0 266.6,257.6 256.6,257.6" fill="#c4b0a4" opacity="0.85"/><polygon points="255.5,217.4 267.3,218.2 267.3,258.2 255.5,258.2" fill="#6e96d7" opacity="0.14"/><polygon points="268.4,251.0 278.1,251.2 278.1,257.7 268.4,257.6" fill="#c4b0a4" opacity="0.85"/><polygon points="267.3,218.2 278.8,219.0 278.8,258.3 267.3,258.2" fill="#14285a" opacity="0.16"/><polygon points="279.9,251.2 289.1,251.3 289.1,257.7 279.9,257.7" fill="#c4b0a4" opacity="0.85"/><polygon points="290.9,251.4 300.0,251.5 300.0,257.7 290.9,257.7" fill="#c4b0a4" opacity="0.27"/><polygon points="289.8,219.7 300.7,220.4 300.7,258.3 289.8,258.3" fill="#6e96d7" opacity="0.14"/><polygon points="301.8,251.5 310.1,251.6 310.1,257.8 301.8,257.8" fill="#c4b0a4" opacity="0.51"/><polygon points="311.9,251.7 321.5,251.8 321.5,257.8 311.9,257.8" fill="#c4b0a4" opacity="0.51"/><polygon points="310.8,221.1 322.2,221.8 322.2,258.4 310.8,258.3" fill="#14285a" opacity="0.16"/><polygon points="322.2,221.8 332.7,222.5 332.7,258.4 322.2,258.4" fill="#6e96d7" opacity="0.14"/><polygon points="332.7,222.5 342.2,223.2 342.2,258.4 332.7,258.4" fill="#14285a" opacity="0.16"/><polygon points="189.9,294.8 203.3,294.2 203.3,301.5 189.9,302.3" fill="#c4b0a4" opacity="0.85"/><polygon points="205.1,294.1 216.7,293.5 216.7,300.7 205.1,301.4" fill="#c4b0a4" opacity="0.85"/><polygon points="204.0,258.0 217.4,258.1 217.4,301.3 204.0,302.1" fill="#6e96d7" opacity="0.14"/><polygon points="218.5,293.4 230.0,292.9 230.0,299.9 218.5,300.6" fill="#c4b0a4" opacity="0.45"/><polygon points="231.8,292.8 242.3,292.3 242.3,299.1 231.8,299.8" fill="#c4b0a4" opacity="0.85"/><polygon points="244.1,292.2 254.8,291.7 254.8,298.4 244.1,299.0" fill="#c4b0a4" opacity="0.85"/><polygon points="243.0,258.2 255.5,258.2 255.5,299.0 243.0,299.7" fill="#14285a" opacity="0.16"/><polygon points="256.6,291.6 266.6,291.1 266.6,297.7 256.6,298.3" fill="#c4b0a4" opacity="0.85"/><polygon points="255.5,258.2 267.3,258.2 267.3,298.2 255.5,299.0" fill="#14285a" opacity="0.16"/><polygon points="268.4,291.0 278.1,290.5 278.1,297.0 268.4,297.6" fill="#c4b0a4" opacity="0.85"/><polygon points="279.9,290.4 289.1,290.0 289.1,296.3 279.9,296.9" fill="#c4b0a4" opacity="0.45"/><polygon points="278.8,258.3 289.8,258.3 289.8,296.9 278.8,297.5" fill="#14285a" opacity="0.16"/><polygon points="290.9,289.9 300.0,289.4 300.0,295.7 290.9,296.2" fill="#c4b0a4" opacity="0.51"/><polygon points="301.8,289.3 310.1,288.9 310.1,295.1 301.8,295.6" fill="#c4b0a4" opacity="0.51"/><polygon points="311.9,288.8 321.5,288.4 321.5,294.4 311.9,295.0" fill="#c4b0a4" opacity="0.51"/><polygon points="322.2,258.4 332.7,258.4 332.7,294.3 322.2,294.9" fill="#6e96d7" opacity="0.14"/><rect x="188.8" y="60" width="153.2" height="240" fill="url(#gtan)"/><rect x="244.6" y="138.6" width="3.4" height="28.9" fill="#b4c8e4" opacity=".5"/><rect x="244.6" y="180.5" width="3.4" height="29.3" fill="#b4c8e4" opacity=".5"/><rect x="244.6" y="222.8" width="3.4" height="28.4" fill="#b4c8e4" opacity=".5"/><rect x="190" y="34" width="2.6" height="220" fill="#9ab6e0" opacity=".5"/><rect x="188.8" y="215" width="153.2" height="85" fill="url(#gwash)"/><rect x="188.2" y="0" width="1.2" height="300" fill="#1f3362" opacity=".82"/><rect x="189.4" y="0" width="0.9" height="300" fill="#8fb0e0" opacity=".32"/><rect x="203.4" y="0" width="1.2" height="300" fill="#1f3362" opacity=".82"/><rect x="204.6" y="0" width="0.9" height="300" fill="#8fb0e0" opacity=".32"/><rect x="216.8" y="0" width="1.2" height="300" fill="#1f3362" opacity=".82"/><rect x="218.0" y="0" width="0.9" height="300" fill="#8fb0e0" opacity=".32"/><rect x="230.1" y="0" width="1.2" height="300" fill="#1f3362" opacity=".82"/><rect x="231.3" y="0" width="0.9" height="300" fill="#8fb0e0" opacity=".32"/><rect x="242.4" y="0" width="1.2" height="300" fill="#1f3362" opacity=".82"/><rect x="243.6" y="0" width="0.9" height="300" fill="#8fb0e0" opacity=".32"/><rect x="254.9" y="0" width="1.2" height="300" fill="#1f3362" opacity=".82"/><rect x="256.1" y="0" width="0.9" height="300" fill="#8fb0e0" opacity=".32"/><rect x="266.7" y="0" width="1.2" height="300" fill="#1f3362" opacity=".82"/><rect x="267.9" y="0" width="0.9" height="300" fill="#8fb0e0" opacity=".32"/><rect x="278.2" y="0" width="1.2" height="300" fill="#1f3362" opacity=".82"/><rect x="279.4" y="0" width="0.9" height="300" fill="#8fb0e0" opacity=".32"/><rect x="289.2" y="0" width="1.2" height="300" fill="#1f3362" opacity=".82"/><rect x="290.4" y="0" width="0.9" height="300" fill="#8fb0e0" opacity=".32"/><rect x="300.1" y="0" width="1.2" height="300" fill="#1f3362" opacity=".82"/><rect x="301.3" y="0" width="0.9" height="300" fill="#8fb0e0" opacity=".32"/><rect x="310.2" y="0" width="1.2" height="300" fill="#1f3362" opacity=".82"/><rect x="311.4" y="0" width="0.9" height="300" fill="#8fb0e0" opacity=".32"/><rect x="321.6" y="0" width="1.2" height="300" fill="#1f3362" opacity=".82"/><rect x="322.8" y="0" width="0.9" height="300" fill="#8fb0e0" opacity=".32"/><rect x="332.1" y="0" width="1.2" height="300" fill="#1f3362" opacity=".82"/><rect x="333.3" y="0" width="0.9" height="300" fill="#8fb0e0" opacity=".32"/><rect x="341.6" y="0" width="1.2" height="300" fill="#1f3362" opacity=".82"/><rect x="342.8" y="0" width="0.9" height="300" fill="#8fb0e0" opacity=".32"/><polygon points="188.8,-58.0 342.0,10.7 342.0,13.5 188.8,-53.6" fill="#1e2c54"/><polygon points="188.8,-56.4 342.0,11.7 342.0,12.5 188.8,-55.2" fill="#466096" opacity="0.8"/><polygon points="188.8,-44.5 342.0,21.3 342.0,22.2 188.8,-43.6" fill="#1e305e" opacity="0.55"/><polygon points="188.8,-13.0 342.0,46.0 342.0,48.8 188.8,-8.6" fill="#1e2c54"/><polygon points="188.8,-11.4 342.0,47.0 342.0,47.8 188.8,-10.2" fill="#466096" opacity="0.8"/><polygon points="188.8,0.6 342.0,56.7 342.0,57.6 188.8,1.5" fill="#1e305e" opacity="0.55"/><polygon points="188.8,32.4 342.0,81.6 342.0,84.4 188.8,36.8" fill="#1e2c54"/><polygon points="188.8,34.0 342.0,82.6 342.0,83.4 188.8,35.2" fill="#466096" opacity="0.8"/><polygon points="188.8,45.6 342.0,91.9 342.0,92.8 188.8,46.5" fill="#1e305e" opacity="0.55"/><polygon points="188.8,76.5 342.0,116.1 342.0,118.9 188.8,80.9" fill="#1e2c54"/><polygon points="188.8,78.1 342.0,117.1 342.0,117.9 188.8,79.3" fill="#466096" opacity="0.8"/><polygon points="188.8,90.0 342.0,126.7 342.0,127.6 188.8,90.9" fill="#1e305e" opacity="0.55"/><polygon points="188.8,121.4 342.0,151.3 342.0,154.1 188.8,125.8" fill="#1e2c54"/><polygon points="188.8,123.0 342.0,152.3 342.0,153.1 188.8,124.2" fill="#466096" opacity="0.8"/><polygon points="188.8,135.1 342.0,162.1 342.0,163.0 188.8,136.0" fill="#1e305e" opacity="0.55"/><polygon points="188.8,167.0 342.0,187.1 342.0,189.9 188.8,171.4" fill="#1e2c54"/><polygon points="188.8,168.6 342.0,188.1 342.0,188.9 188.8,169.8" fill="#466096" opacity="0.8"/><polygon points="188.8,180.8 342.0,197.9 342.0,198.8 188.8,181.7" fill="#1e305e" opacity="0.55"/><polygon points="188.8,213.0 342.0,223.2 342.0,226.0 188.8,217.4" fill="#1e2c54"/><polygon points="188.8,214.6 342.0,224.2 342.0,224.9 188.8,215.8" fill="#466096" opacity="0.8"/><polygon points="188.8,226.5 342.0,233.7 342.0,234.6 188.8,227.4" fill="#1e305e" opacity="0.55"/><polygon points="188.8,258.0 342.0,258.4 342.0,261.2 188.8,262.4" fill="#1e2c54"/><polygon points="188.8,259.6 342.0,259.4 342.0,260.2 188.8,260.8" fill="#466096" opacity="0.8"/><polygon points="188.8,271.5 342.0,269.0 342.0,269.9 188.8,272.4" fill="#1e305e" opacity="0.55"/><polygon points="188.8,303.0 342.0,293.7 342.0,296.5 188.8,307.4" fill="#1e2c54"/><polygon points="188.8,304.6 342.0,294.7 342.0,295.5 188.8,305.8" fill="#466096" opacity="0.8"/><rect x="342" y="0" width="9" height="300" fill="#c8a666"/><rect x="342" y="0" width="9" height="300" fill="url(#rs)"/><rect x="350.6" y="0" width="15.4" height="300" fill="#e8d9ba"/><polygon points="344,12.6 351,12.6 351,30 344,22" fill="#7c6a5c"/><polygon points="287,0 296,0 302.5,8 304,12.6 300.5,15.5" fill="#6f5f62"/><polygon points="277,0 287,0 300.5,15.5 297,17" fill="#2a3a68" opacity=".7"/><polygon points="302,12.6 345,12.6 345,15 301,15" fill="#222c50"/><polygon points="302.5,8 351.5,8 349.5,12.8 304,12.8" fill="#cdbc9c"/><polygon points="296,0 302.5,8 351.5,8 366,21.6 366,0" fill="#e4d5b6"/><path d="M351.5 8L351 22" stroke="#cbb896" stroke-width=".8"/><text transform="translate(361.3 250) rotate(-90)" font-size="7.9" fill="#6f665e" font-family="Liberation Sans, sans-serif" textLength="221" lengthAdjust="spacingAndGlyphs">Bradford College, UK | Bond Bryan Architects | www.bondbryan.com</text></g></g></g>
<rect x="11" y="548" width="32" height="15" rx="1.5" fill="#f0f0f0" opacity=".93"/>
<path d="M16 554.9H39.2" stroke="#f0a050" stroke-width="2.2" stroke-dasharray="4.8 1.2" fill="none"/>
<rect x="714.5" y="33" width="17" height="31" rx="1.5" fill="#f0f0f0" opacity=".93"/>
<path d="M723 38.4V61.6" stroke="#f0a050" stroke-width="2" stroke-dasharray="4.8 1.2" fill="none"/>
</svg></div><div id="vscroll"><div class="thumb"></div><svg class="abs" style="left:2.5px;top:552px" width="10" height="8"><path d="M1 1.2L4.5 5L8 1.2" stroke="#404040" stroke-width="2" fill="none"/></svg></div><div id="hscroll"><div class="thumb"></div><svg class="abs" style="left:720px;top:2px" width="8" height="10"><path d="M1.4 1L5.2 4.6L1.4 8.2" stroke="#404040" stroke-width="2" fill="none"/></svg></div>
<svg width="0" height="0" style="position:absolute"><defs><linearGradient id="eg" x1="0" y1="0" x2="1" y2="1"><stop offset="0" stop-color="#fff"/><stop offset="1" stop-color="#c6ccd6"/></linearGradient></defs></svg><div class="tree"><div class="abs" style="left:12px;top:0px;width:1px;height:317px;background:repeating-linear-gradient(to bottom,#7f7f7f 0 1px,transparent 1px 2px)"></div><div class="abs" style="left:31px;top:0px;width:1px;height:317px;background:repeating-linear-gradient(to bottom,#7f7f7f 0 1px,transparent 1px 2px)"></div><div class="abs" style="left:50px;top:24px;width:1px;height:42px;background:repeating-linear-gradient(to bottom,#7f7f7f 0 1px,transparent 1px 2px)"></div><div class="abs" style="left:50px;top:88px;width:1px;height:106px;background:repeating-linear-gradient(to bottom,#7f7f7f 0 1px,transparent 1px 2px)"></div><div class="abs" style="left:69px;top:104px;width:1px;height:58px;background:repeating-linear-gradient(to bottom,#7f7f7f 0 1px,transparent 1px 2px)"></div><div class="abs" style="left:50px;top:216px;width:1px;height:74px;background:repeating-linear-gradient(to bottom,#7f7f7f 0 1px,transparent 1px 2px)"></div><div class="abs" style="left:32px;top:1px;width:10px;height:1px;background:repeating-linear-gradient(to right,#7f7f7f 0 1px,transparent 1px 2px)"></div><svg class="abs" style="left:43px;top:-7px" width="16" height="16" viewBox="0 0 16 16" ><rect x="0.5" y="2.5" width="14" height="11" fill="#fff" stroke="#0b0b4f"/><rect x="0" y="2" width="15" height="2.2" fill="#0b0b4f"/><circle cx="5.5" cy="7" r="2.6" fill="#888" stroke="#000"/><path d="M5.5 4V13M11 4V10M9.5 9L11 11L12.5 9Z" stroke="#000" fill="#000" stroke-width="1"/></svg><div class="trow" style="left:61.8px;top:-8px">3D Documents</div><div class="abs" style="left:37px;top:17px;width:5px;height:1px;background:repeating-linear-gradient(to right,#7f7f7f 0 1px,transparent 1px 2px)"></div><svg class="abs" style="left:27px;top:13px" width="9" height="9" viewBox="0 0 9 9" ><rect x="0.5" y="0.5" width="8" height="8" rx="1" fill="url(#eg)" stroke="#8e99ab"/><path d="M2 4.5H7" stroke="#1c2a6a" stroke-width="1.1"/></svg><svg class="abs" style="left:43px;top:9px" width="16" height="16" viewBox="0 0 16 16" ><rect x="0.5" y="2.5" width="14" height="11" fill="#fff" stroke="#0b0b4f"/><rect x="0" y="2" width="15" height="2.2" fill="#0b0b4f"/><path d="M5 7.2L7.6 6L10.6 6.8V10.4L7.8 11.8L5 10.8Z" fill="#000"/><path d="M6.2 8.4H8.6V10.6H6.2Z" fill="#fff"/><path d="M7.4 8.2L10.4 7" stroke="#fff" stroke-width=".7"/></svg><div class="trow" style="left:61.8px;top:8px">3D</div><div class="abs" style="left:51px;top:33px;width:10px;height:1px;background:repeating-linear-gradient(to right,#7f7f7f 0 1px,transparent 1px 2px)"></div><svg class="abs" style="left:62px;top:25px" width="16" height="16" viewBox="0 0 16 16" ><path d="M5.5 9L1.8 13.6M6.2 9V13.4M7 9L10.6 13.4" stroke="#000" stroke-width="1.1" fill="none"/><rect x="0.8" y="3.4" width="10" height="6" rx="2" fill="#e8884a" stroke="#3a1a08" stroke-width=".9"/><path d="M10.6 6.4L13.8 3.6V9.4Z" fill="#f0b088" stroke="#000" stroke-width=".9"/><path d="M2.2 5H9" stroke="#f8c8a0" stroke-width="1"/></svg><div class="trow" style="left:80.8px;top:24px">Generic Perspective</div><div class="abs" style="left:51px;top:49px;width:10px;height:1px;background:repeating-linear-gradient(to right,#7f7f7f 0 1px,transparent 1px 2px)"></div><svg class="abs" style="left:62px;top:41px" width="16" height="16" viewBox="0 0 16 16" ><path d="M1 6.2L4 3.6L7 6L10.6 3.6L13.6 6.2V10.6L7 14.2L1 10.6Z" fill="#fff" stroke="#000" stroke-width="1"/><path d="M1 6.2L7 9.4V14.2L1 10.6Z" fill="#f0a070" stroke="#000" stroke-width=".9"/><path d="M7 9.4L13.6 6.2V10.6L7 14.2Z" fill="#e07838" stroke="#000" stroke-width=".9"/></svg><div class="trow" style="left:80.8px;top:40px">Generic Axonometry</div><div class="abs" style="left:51px;top:65px;width:10px;height:1px;background:repeating-linear-gradient(to right,#7f7f7f 0 1px,transparent 1px 2px)"></div><svg class="abs" style="left:62px;top:57px" width="16" height="16" viewBox="0 0 16 16" ><path d="M9 6.4C8 3 12 1.2 13.6 3.8C14.2 5 13.8 6 13.6 7" stroke="#000" stroke-width="1" fill="none"/><rect x="4" y="6.2" width="7.6" height="4.6" rx="1.4" fill="#e8884a" stroke="#3a1a08" stroke-width=".8"/><path d="M0.6 5.8L4.2 8.2L0.8 9.6M11.6 8L14 6.4V10.6Z" fill="#e8884a" stroke="#000" stroke-width=".8"/><path d="M6.6 10.8C6 12.6 3.4 13.8 1.4 13.6" stroke="#000" stroke-width="1" fill="none"/></svg><div class="trow" style="left:80.8px;top:56px">00 Untitled Path</div><div class="abs" style="left:37px;top:81px;width:5px;height:1px;background:repeating-linear-gradient(to right,#7f7f7f 0 1px,transparent 1px 2px)"></div><svg class="abs" style="left:27px;top:77px" width="9" height="9" viewBox="0 0 9 9" ><rect x="0.5" y="0.5" width="8" height="8" rx="1" fill="url(#eg)" stroke="#8e99ab"/><path d="M2 4.5H7" stroke="#1c2a6a" stroke-width="1.1"/></svg><svg class="abs" style="left:43px;top:73px" width="16" height="16" viewBox="0 0 16 16" ><rect x="0.5" y="2.5" width="14" height="11" fill="#fff" stroke="#0b0b4f"/><rect x="0" y="2" width="15" height="2.2" fill="#0b0b4f"/><path d="M3 6.5H12V11.5H3ZM3 9H12M6 6.5V11.5M9 6.5V11.5" stroke="#000" stroke-width="1.1" fill="none"/></svg><div class="trow" style="left:61.8px;top:72px">Schedules</div><div class="abs" style="left:56px;top:97px;width:5px;height:1px;background:repeating-linear-gradient(to right,#7f7f7f 0 1px,transparent 1px 2px)"></div><svg class="abs" style="left:46px;top:93px" width="9" height="9" viewBox="0 0 9 9" ><rect x="0.5" y="0.5" width="8" height="8" rx="1" fill="url(#eg)" stroke="#8e99ab"/><path d="M2 4.5H7" stroke="#1c2a6a" stroke-width="1.1"/></svg><svg class="abs" style="left:62px;top:89px" width="16" height="16" viewBox="0 0 16 16" ><path d="M3.4 1.2H14.4L12.6 3.6V11H1.2L3.4 8.6Z" fill="#9ad8f0" stroke="#2a5a9a" stroke-width=".9"/><path d="M4.6 4H8M4.6 6H8M4.6 8H7" stroke="#123a8a" stroke-width="1"/><rect x="9" y="3.4" width="2.6" height="2.4" fill="none" stroke="#123a8a" stroke-width=".9"/><path d="M6.4 12.2L10 9L13.8 12.2V15H6.4Z" fill="#f0a060" stroke="#000" stroke-width=".9"/><path d="M9 12H11V15H9Z" fill="#fff" stroke="#000" stroke-width=".6"/></svg><div class="trow" style="left:80.8px;top:88px">Element</div><div class="abs" style="left:70px;top:113px;width:10px;height:1px;background:repeating-linear-gradient(to right,#7f7f7f 0 1px,transparent 1px 2px)"></div><svg class="abs" style="left:81px;top:105px" width="14" height="16" viewBox="0 0 14 16" ><rect x="0.5" y="0.5" width="12.4" height="14.4" fill="#e4f2ec" stroke="#161616"/><rect x="2.2" y="2.2" width="9" height="11" fill="#5f8579"/><path d="M5 2.2V13.2M8.2 2.2V13.2M2.2 4.6H11.2M2.2 6.8H11.2M2.2 9H11.2M2.2 11.2H11.2" stroke="#d6e8e0" stroke-width="1"/></svg><div class="trow" style="left:99.8px;top:104px">All Openings Schedule</div><div class="abs" style="left:70px;top:129px;width:10px;height:1px;background:repeating-linear-gradient(to right,#7f7f7f 0 1px,transparent 1px 2px)"></div><svg class="abs" style="left:81px;top:121px" width="14" height="16" viewBox="0 0 14 16" ><rect x="0.5" y="0.5" width="12.4" height="14.4" fill="#e4f2ec" stroke="#161616"/><rect x="2.2" y="2.2" width="9" height="11" fill="#5f8579"/><path d="M5 2.2V13.2M8.2 2.2V13.2M2.2 4.6H11.2M2.2 6.8H11.2M2.2 9H11.2M2.2 11.2H11.2" stroke="#d6e8e0" stroke-width="1"/></svg><div class="trow" style="left:99.8px;top:120px">Default BIMx IES</div><div class="abs" style="left:70px;top:145px;width:10px;height:1px;background:repeating-linear-gradient(to right,#7f7f7f 0 1px,transparent 1px 2px)"></div><svg class="abs" style="left:81px;top:137px" width="14" height="16" viewBox="0 0 14 16" ><rect x="0.5" y="0.5" width="12.4" height="14.4" fill="#e4f2ec" stroke="#161616"/><rect x="2.2" y="2.2" width="9" height="11" fill="#5f8579"/><path d="M5 2.2V13.2M8.2 2.2V13.2M2.2 4.6H11.2M2.2 6.8H11.2M2.2 9H11.2M2.2 11.2H11.2" stroke="#d6e8e0" stroke-width="1"/></svg><div class="trow" style="left:99.8px;top:136px">Object Inventory</div><div class="abs" style="left:70px;top:161px;width:10px;height:1px;background:repeating-linear-gradient(to right,#7f7f7f 0 1px,transparent 1px 2px)"></div><svg class="abs" style="left:81px;top:153px" width="14" height="16" viewBox="0 0 14 16" ><rect x="0.5" y="0.5" width="12.4" height="14.4" fill="#e4f2ec" stroke="#161616"/><rect x="2.2" y="2.2" width="9" height="11" fill="#5f8579"/><path d="M5 2.2V13.2M8.2 2.2V13.2M2.2 4.6H11.2M2.2 6.8H11.2M2.2 9H11.2M2.2 11.2H11.2" stroke="#d6e8e0" stroke-width="1"/></svg><div class="trow" style="left:99.8px;top:152px">Wall Schedule</div><div class="abs" style="left:56px;top:177px;width:5px;height:1px;background:repeating-linear-gradient(to right,#7f7f7f 0 1px,transparent 1px 2px)"></div><svg class="abs" style="left:46px;top:173px" width="9" height="9" viewBox="0 0 9 9" ><rect x="0.5" y="0.5" width="8" height="8" rx="1" fill="url(#eg)" stroke="#8e99ab"/><path d="M2 4.5H7" stroke="#1c2a6a" stroke-width="1.1"/><path d="M4.5 2V7" stroke="#1c2a6a" stroke-width="1.1"/></svg><svg class="abs" style="left:62px;top:169px" width="16" height="16" viewBox="0 0 16 16" ><path d="M3.4 1.2H14.4L12.6 3.6V11H1.2L3.4 8.6Z" fill="#9ad8f0" stroke="#2a5a9a" stroke-width=".9"/><path d="M4.6 4H8M4.6 6H8M4.6 8H7" stroke="#123a8a" stroke-width="1"/><rect x="9" y="3.4" width="2.6" height="2.4" fill="none" stroke="#123a8a" stroke-width=".9"/><path d="M9 13.8L13 9.6L15 11V14.6H9Z" fill="#e09830"/><path d="M3.6 11.4L6.4 9.2H11.6L12.4 11.4L9.6 14H4.4Z" fill="#c0103c"/><path d="M6 9.6L8 8H11.6L12 9.8Z" fill="#e02850"/></svg><div class="trow" style="left:80.8px;top:168px">Component</div><div class="abs" style="left:56px;top:193px;width:5px;height:1px;background:repeating-linear-gradient(to right,#7f7f7f 0 1px,transparent 1px 2px)"></div><svg class="abs" style="left:46px;top:189px" width="9" height="9" viewBox="0 0 9 9" ><rect x="0.5" y="0.5" width="8" height="8" rx="1" fill="url(#eg)" stroke="#8e99ab"/><path d="M2 4.5H7" stroke="#1c2a6a" stroke-width="1.1"/><path d="M4.5 2V7" stroke="#1c2a6a" stroke-width="1.1"/></svg><svg class="abs" style="left:62px;top:185px" width="16" height="16" viewBox="0 0 16 16" ><path d="M3.4 1.2H14.4L12.6 3.6V11H1.2L3.4 8.6Z" fill="#9ad8f0" stroke="#2a5a9a" stroke-width=".9"/><path d="M4.6 4H8M4.6 6H8M4.6 8H7" stroke="#123a8a" stroke-width="1"/><rect x="9" y="3.4" width="2.6" height="2.4" fill="none" stroke="#123a8a" stroke-width=".9"/><path d="M10.4 3.2L11.8 2.6L12.4 8.6H10.2Z" fill="#101020"/><path d="M8 8.6H14V11.4H8Z" fill="#101020"/><path d="M7 15L8 11.4H14L14.6 15Z" fill="#50d0d8" stroke="#101020" stroke-width=".8"/><path d="M9 12.4V14.6M10.6 12.4V14.6M12.2 12.4V14.6" stroke="#e8ffff" stroke-width=".7"/></svg><div class="trow" style="left:80.8px;top:184px">Surface</div><div class="abs" style="left:37px;top:209px;width:5px;height:1px;background:repeating-linear-gradient(to right,#7f7f7f 0 1px,transparent 1px 2px)"></div><svg class="abs" style="left:27px;top:205px" width="9" height="9" viewBox="0 0 9 9" ><rect x="0.5" y="0.5" width="8" height="8" rx="1" fill="url(#eg)" stroke="#8e99ab"/><path d="M2 4.5H7" stroke="#1c2a6a" stroke-width="1.1"/></svg><svg class="abs" style="left:43px;top:201px" width="16" height="16" viewBox="0 0 16 16" ><rect x="0.5" y="2.5" width="14" height="11" fill="#fff" stroke="#0b0b4f"/><rect x="0" y="2" width="15" height="2.2" fill="#0b0b4f"/><path d="M2.6 6L5.4 6L4 7.8Z" fill="#000"/><path d="M6.5 6.5H12.5M4 9.5H12.5M4 11.5H12.5" stroke="#000" stroke-width="1.1"/></svg><div class="trow" style="left:61.8px;top:200px">Project Indexes</div><div class="abs" style="left:51px;top:225px;width:10px;height:1px;background:repeating-linear-gradient(to right,#7f7f7f 0 1px,transparent 1px 2px)"></div><svg class="abs" style="left:62px;top:217px" width="16" height="16" viewBox="0 0 16 16" ><path d="M3 10C0.8 8 2.4 5 4.6 5.4C4.6 2 8.4 1 10 3.4C12.4 2 15 4.6 13.2 7C15.4 9 13.4 12 11 11.2C10 13 7 13 6 11.6Z" fill="#dceafc" stroke="#000" stroke-width="1"/><rect x="0.6" y="8" width="7.4" height="7.2" fill="#a4c8f8" stroke="#0c1c8c" stroke-width="1.1"/><path d="M2.2 10.4H5.6M2.2 12.6H5.6" stroke="#0c1c8c" stroke-width="1.2"/></svg><div class="trow" style="left:80.8px;top:216px">Change List</div><div class="abs" style="left:51px;top:241px;width:10px;height:1px;background:repeating-linear-gradient(to right,#7f7f7f 0 1px,transparent 1px 2px)"></div><svg class="abs" style="left:62px;top:233px" width="16" height="16" viewBox="0 0 16 16" ><path d="M2 1H10.4L13 3.6V8" fill="none" stroke="#000" stroke-width="1"/><path d="M2 1V8" stroke="#000"/><path d="M5 4.4H11V7H14.4V12.4H8" fill="#fff" stroke="#000" stroke-width="1"/><path d="M10.4 1V3.6H13" fill="none" stroke="#000" stroke-width=".8"/><rect x="0.6" y="8" width="7.4" height="7.2" fill="#a4c8f8" stroke="#0c1c8c" stroke-width="1.1"/><path d="M2.2 10.4H5.6M2.2 12.6H5.6" stroke="#0c1c8c" stroke-width="1.2"/></svg><div class="trow" style="left:80.8px;top:232px">Drawing List</div><div class="abs" style="left:51px;top:257px;width:10px;height:1px;background:repeating-linear-gradient(to right,#7f7f7f 0 1px,transparent 1px 2px)"></div><svg class="abs" style="left:62px;top:249px" width="16" height="16" viewBox="0 0 16 16" ><path d="M3.6 1.6H14.6V10.6H13.4" fill="#fff" stroke="#000" stroke-width=".9"/><rect x="2" y="3" width="11.4" height="9" fill="#1f8a2c" stroke="#0a300c" stroke-width="1"/><path d="M3 5H12" stroke="#4cc050" stroke-width="1.2"/><path d="M13.4 6H14.6M13.4 8.4H14.6" stroke="#000" stroke-width=".8"/><rect x="0.6" y="8" width="7.4" height="7.2" fill="#a4c8f8" stroke="#0c1c8c" stroke-width="1.1"/><path d="M2.2 10.4H5.6M2.2 12.6H5.6" stroke="#0c1c8c" stroke-width="1.2"/></svg><div class="trow" style="left:80.8px;top:248px">Issue History</div><div class="abs" style="left:51px;top:273px;width:10px;height:1px;background:repeating-linear-gradient(to right,#7f7f7f 0 1px,transparent 1px 2px)"></div><svg class="abs" style="left:62px;top:265px" width="16" height="16" viewBox="0 0 16 16" ><path d="M1.6 8V1.6H13.6V6" fill="#fff" stroke="#000" stroke-width="1.1"/><rect x="9.4" y="6" width="5" height="7" fill="#f4ecd8" stroke="#000" stroke-width="1"/><path d="M9.4 8.2H14.4M9.4 10.4H14.4" stroke="#000" stroke-width="1.1"/><path d="M8 13H9.4" stroke="#000"/><rect x="0.6" y="8" width="7.4" height="7.2" fill="#a4c8f8" stroke="#0c1c8c" stroke-width="1.1"/><path d="M2.2 10.4H5.6M2.2 12.6H5.6" stroke="#0c1c8c" stroke-width="1.2"/></svg><div class="trow" style="left:80.8px;top:264px">Sheet Index</div><div class="abs" style="left:51px;top:289px;width:10px;height:1px;background:repeating-linear-gradient(to right,#7f7f7f 0 1px,transparent 1px 2px)"></div><svg class="abs" style="left:62px;top:281px" width="16" height="16" viewBox="0 0 16 16" ><rect x="1.6" y="1.8" width="5.6" height="5" fill="#f0d8a0" stroke="#000" stroke-width=".9"/><path d="M3.4 1.8V4.4H5.4V1.8" fill="#d09040" stroke="#604020" stroke-width=".5"/><rect x="8" y="6.6" width="6.6" height="5.8" fill="#e88870" stroke="#000" stroke-width=".9"/><path d="M8.4 7H14.2V9H8.4Z" fill="#f0c090"/><path d="M8.4 10.4H14.2V12H8.4Z" fill="#c8d890" opacity=".8"/><rect x="0.6" y="8" width="7.4" height="7.2" fill="#a4c8f8" stroke="#0c1c8c" stroke-width="1.1"/><path d="M2.2 10.4H5.6M2.2 12.6H5.6" stroke="#0c1c8c" stroke-width="1.2"/></svg><div class="trow" style="left:80.8px;top:280px">View List</div><div class="abs" style="left:37px;top:305px;width:5px;height:1px;background:repeating-linear-gradient(to right,#7f7f7f 0 1px,transparent 1px 2px)"></div><svg class="abs" style="left:27px;top:301px" width="9" height="9" viewBox="0 0 9 9" ><rect x="0.5" y="0.5" width="8" height="8" rx="1" fill="url(#eg)" stroke="#8e99ab"/><path d="M2 4.5H7" stroke="#1c2a6a" stroke-width="1.1"/><path d="M4.5 2V7" stroke="#1c2a6a" stroke-width="1.1"/></svg><svg class="abs" style="left:43px;top:297px" width="16" height="16" viewBox="0 0 16 16" ><rect x="0.5" y="2.5" width="14" height="11" fill="#fff" stroke="#0b0b4f"/><rect x="0" y="2" width="15" height="2.2" fill="#0b0b4f"/><rect x="4.3" y="5.6" width="6.4" height="6" fill="#fff" stroke="#000" stroke-width="1"/><path d="M6 7.7H9M6 9.6H9" stroke="#000" stroke-width=".9"/></svg><div class="trow" style="left:61.8px;top:296px">Lists</div><div class="abs" style="left:32px;top:321px;width:10px;height:1px;background:repeating-linear-gradient(to right,#7f7f7f 0 1px,transparent 1px 2px)"></div><svg class="abs" style="left:43px;top:313px" width="16" height="16" viewBox="0 0 16 16" ><rect x="0.5" y="2.5" width="14" height="11" fill="#fff" stroke="#0b0b4f"/><rect x="0" y="2" width="15" height="2.2" fill="#0b0b4f"/><path d="M2.6 6L5.4 6L4 7.8Z" fill="#000"/><path d="M6.5 6.5H12.5M4 9.5H12.5M4 11.5H12.5" stroke="#000" stroke-width="1.1"/></svg><div class="trow" style="left:61.8px;top:312px">Info</div></div><div class="abs" style="left:753px;top:0;width:2px;height:334px;background:#828282"></div><div class="abs" style="left:748px;top:0;width:5px;height:581px;background:#f0f0f0"></div><div class="abs" style="left:981px;top:0;width:16px;height:317px;background:#f0f0f0"><div class="abs" style="left:0;top:0;width:15px;height:271px;background:#cdcdcd"></div><svg class="abs" style="left:3.5px;top:304.5px" width="10" height="8"><path d="M1 1.2L4.5 5L8 1.2" stroke="#404040" stroke-width="2" fill="none"/></svg></div><div class="abs" style="left:755px;top:317px;width:242px;height:16px;background:#f0f0f0"><div class="abs" style="left:18px;top:1px;width:146px;height:14px;background:#cdcdcd"></div><svg class="abs" style="left:5px;top:3px" width="8" height="10"><path d="M6.2 1L2.4 4.6L6.2 8.2" stroke="#404040" stroke-width="2" fill="none"/></svg><svg class="abs" style="left:213px;top:3px" width="8" height="10"><path d="M1.4 1L5.2 4.6L1.4 8.2" stroke="#404040" stroke-width="2" fill="none"/></svg></div><div class="abs" style="left:753px;top:333px;width:244px;height:1px;background:#cfcfcf"></div><div class="abs" style="left:753px;top:334px;width:244px;height:1px;background:#6e6e6e"></div><div class="abs" style="left:755px;top:335px;width:242px;height:1px;background:#fff"></div><div class="abs" style="left:753px;top:335px;width:1px;height:106px;background:#b4b4b4"></div><div class="abs" style="left:753px;top:440px;width:244px;height:1px;background:#a8a8a8"></div><div class="abs" style="left:754px;top:441px;width:243px;height:1px;background:#fafafa"></div><div class="abs" style="left:954px;top:342px;width:21px;height:21px;border:1px solid #b4b4b4;background:#e6e6e6;box-sizing:border-box"></div><svg class="abs" style="left:956px;top:343px" width="18" height="18" viewBox="0 0 18 18" ><rect x="2" y="5" width="12" height="10.6" fill="#f09448" stroke="#10104a" stroke-width="1.4"/><path d="M13.5 1V9M9.8 4.8H17.4M10.8 2L16.4 7.6M16.4 2L10.8 7.6" stroke="#f4ea20" stroke-width="1.2"/></svg><div class="abs" style="left:977px;top:342px;width:22px;height:21px;border:1px solid #b4b4b4;background:#e6e6e6;box-sizing:border-box"></div><svg class="abs" style="left:980px;top:345px" width="16" height="16" viewBox="0 0 16 16" ><path d="M2 2.4C6 5 10 9.6 12.6 14M12.8 1.6C9 5 5 9.6 2.2 14.2" stroke="#cc1418" stroke-width="2.9" fill="none" stroke-linecap="round"/></svg><div class="abs" style="left:755px;top:369px;width:242px;height:19px;background:linear-gradient(#f6f6f6,#f0f0f0)"></div><svg class="abs" style="left:766px;top:374px" width="11" height="8" viewBox="0 0 11 8" ><path d="M0.5 1H10.5L5.5 7Z" fill="#111"/></svg><div class="abs" style="left:785px;top:370.6px;font:13px/16px 'Liberation Sans',sans-serif;letter-spacing:.75px">Properties</div><svg class="abs" style="left:755px;top:395px" width="10" height="10" viewBox="0 0 10 10" ><path d="M1 2H5.6V4.4H8.6V9H1Z" fill="#f0a060" stroke="#6a2a10" stroke-width="1"/></svg><div class="abs" style="left:768px;top:393px;width:51px;height:16px;box-sizing:border-box;border:1px solid #d4d4d4;border-top-color:#bcbcbc;background:#f0f0f0;font:13px/14px 'Liberation Sans',sans-serif;padding-left:1px;color:#222">0.</div><div class="abs" style="left:822px;top:391px;width:180px;height:19px;box-sizing:border-box;border:1px solid #b0b0b0;border-top-color:#747474;border-bottom-color:#8a8a8a;background:#fff;font:13px/17px 'Liberation Sans',sans-serif;padding-left:4px;letter-spacing:.4px">Ground Floor</div><div class="abs" style="left:769px;top:415px;width:216px;height:20px;box-sizing:border-box;border:1px solid #adadad;background:#e1e1e1;font:13px/18px 'Liberation Sans',sans-serif;text-align:center;letter-spacing:.4px">Settings...</div><div class="abs" style="left:753px;top:445px;width:244px;height:15px;background:linear-gradient(#d2dcea,#bccadd)"></div><div class="abs" style="left:753px;top:445px;width:2px;height:136px;background:#6e6e6e"></div><div class="abs" style="left:756.5px;top:444px;font:bold 13.2px/16px 'Liberation Sans',sans-serif;letter-spacing:.72px;color:#000">Quick Options</div><svg class="abs" style="left:973px;top:449px" width="9" height="6" viewBox="0 0 9 6" ><path d="M0.5 .8H8.5L4.5 5.4Z" fill="#111"/></svg><svg class="abs" style="left:988px;top:448px" width="8" height="8" viewBox="0 0 8 8" ><path d="M1 1L7 7M7 1L1 7" stroke="#111" stroke-width="1.6"/></svg><div class="abs" style="left:755px;top:460px;width:242px;height:121px;background:#fff"></div><svg class="abs" style="left:760px;top:465px" width="11" height="11" viewBox="0 0 11 11" ><path d="M3 2.5H8.5L7 4H1.5ZM3 5H8.5L7 6.5H1.5ZM3 7.5H8.5L7 9H1.5Z" fill="none" stroke="#111" stroke-width=".9"/></svg><div class="abs" style="left:774.4px;top:463px;line-height:16px;font-size:10.4px;white-space:nowrap">Custom</div><svg class="abs" style="left:760px;top:482px" width="11" height="11" viewBox="0 0 11 11" ><rect x="1" y="3" width="8.6" height="4.6" fill="none" stroke="#111" stroke-width="1.2"/><path d="M3 5.4V7.4M5.2 5.4V7.4M7.4 5.4V7.4" stroke="#111" stroke-width=".9"/></svg><div class="abs" style="left:774.4px;top:480px;line-height:16px;font-size:10.4px;white-space:nowrap">1:200</div><svg class="abs" style="left:760px;top:499px" width="11" height="11" viewBox="0 0 11 11" ><rect x="1.2" y="1.2" width="8" height="8" fill="#111"/><path d="M3 3H5V5H3ZM6 3H7.6V4.4H6ZM3 6H4.6V7.6H3ZM5.6 5.6H7.6V7.6H5.6Z" fill="#fff"/></svg><div class="abs" style="left:774.4px;top:497px;line-height:16px;font-size:10.4px;white-space:nowrap">Entire Model</div><svg class="abs" style="left:760px;top:516px" width="11" height="11" viewBox="0 0 11 11" ><path d="M3 .8H7V5L5.6 7.4V9.6H4.4V7.4L3 5Z" fill="#111"/><path d="M4.4 2.2H5.6V4.4H4.4Z" fill="#fff"/></svg><div class="abs" style="left:774.4px;top:514px;line-height:16px;font-size:10.4px;white-space:nowrap">03 Architectural 100</div><svg class="abs" style="left:760px;top:533px" width="11" height="11" viewBox="0 0 11 11" ><rect x="1" y="1.4" width="8.6" height="7.6" fill="none" stroke="#111" stroke-width="1.2"/><rect x="3.4" y="3.8" width="3.8" height="2.8" fill="none" stroke="#111" stroke-width="1"/></svg><div class="abs" style="left:774.4px;top:531px;line-height:16px;font-size:10.4px;white-space:nowrap">03 Building Plans</div><svg class="abs" style="left:760px;top:550px" width="11" height="11" viewBox="0 0 11 11" ><path d="M.8 9.4V6L5 1.4H9.4V9.4Z" fill="none" stroke="#111" stroke-width="1.1"/><path d="M2.6 9V6.6H4.4V9M6 4H8V6H6ZM6 7H8V9" fill="none" stroke="#111" stroke-width=".9"/></svg><svg class="abs" style="left:760px;top:567px" width="11" height="11" viewBox="0 0 11 11" ><path d="M1 3H9.6M1 7.4H9.6M2.6 1.4V9M8 1.4V9" stroke="#111" stroke-width="1.2"/></svg><div class="abs" style="left:774.4px;top:565px;line-height:16px;font-size:10.4px;white-space:nowrap">Plain Meter</div>
<div class="abs" style="left:0;top:581px;width:753px;height:26px;background:#f0f0f0"></div><div class="abs" style="left:0;top:580px;width:748px;height:1px;background:#f8f8f8"></div><svg class="abs" style="left:0px;top:584px" width="50" height="23" viewBox="0 0 50 23" ><g stroke="#8a8a8a" stroke-width="1.1" fill="none"><path d="M7 8.5H14M10.5 5V12"/><path d="M10.5 13.5V17" stroke-dasharray="1.5 1.5"/><path d="M2 22L10.5 18"/><path d="M35 17.5H42M38.5 14V21"/><path d="M30 18.5H33" stroke-dasharray="1.5 1.5"/><path d="M23 22.5L31 18.5"/></g></svg><div class="abs" style="left:53px;top:585px;width:26px;height:22px;background:#cce4f7"></div><svg class="abs" style="left:56px;top:586.5px" width="22" height="22" viewBox="0 0 22 22" ><g stroke="#0a0a0a" stroke-width="1.25" fill="none"><rect x="6.5" y="3.5" width="11" height="11"/><rect x="2.5" y="8.5" width="11" height="12"/><circle cx="6.5" cy="3.5" r="2"/><circle cx="17.5" cy="3.5" r="2"/><circle cx="17.5" cy="14.5" r="2"/><circle cx="2.5" cy="8.5" r="2"/><circle cx="13.5" cy="8.5" r="2"/><circle cx="2.5" cy="20.5" r="2"/><circle cx="13.5" cy="20.5" r="2"/><circle cx="6.5" cy="14.5" r="2"/></g></svg><svg class="abs" style="left:82px;top:586.5px" width="22" height="22" viewBox="0 0 22 22" ><g stroke="#0a0a0a" stroke-width="1.25" fill="none"><rect x="7.5" y="4.5" width="10" height="10"/><rect x="2.5" y="9.5" width="10" height="11"/><circle cx="2.5" cy="9.5" r="2"/><circle cx="12.5" cy="9.5" r="2"/><circle cx="2.5" cy="20.5" r="2"/><circle cx="12.5" cy="20.5" r="2"/></g></svg><div class="abs" style="left:114px;top:586px;width:24px;height:22px;box-sizing:border-box;background:#dcdcdc;border:1px solid #c6c6c6"></div><svg class="abs" style="left:116px;top:587px" width="22" height="20" viewBox="0 0 22 20" ><g fill="#222"><circle cx="5" cy="4" r=".8"/><circle cx="8.5" cy="2.6" r=".8"/><circle cx="12" cy="3" r=".8"/><circle cx="14.6" cy="5" r=".8"/><circle cx="3" cy="7" r=".8"/><circle cx="2.4" cy="10.6" r=".8"/><circle cx="3.6" cy="14" r=".8"/><circle cx="6" cy="16.6" r=".8"/><circle cx="9.4" cy="17.6" r=".8"/><circle cx="6.4" cy="8" r=".7"/><circle cx="6" cy="12" r=".7"/><circle cx="9" cy="14" r=".7"/><circle cx="9.6" cy="6" r=".7"/></g><path d="M11 9L19 17.4" stroke="#000" stroke-width="2.2"/><path d="M9.4 7.4L13.2 8.4L10.4 11.2Z" fill="#fff" stroke="#000" stroke-width=".9"/></svg><div class="abs" style="left:143px;top:582px;width:1px;height:25px;background:#c4c4c4"></div><div class="abs" style="left:150px;top:586px;width:24px;height:22px;box-sizing:border-box;background:#cce4f7;border:1px solid #2e8ad0"></div><div class="abs" style="left:176px;top:586px;width:24px;height:22px;box-sizing:border-box;background:#cce4f7;border:1px solid #2e8ad0"></div><svg class="abs" style="left:152px;top:588px" width="20" height="19" viewBox="0 0 20 19" ><path d="M4.5 3V13" stroke="#1c7acc" stroke-width="1.3" stroke-dasharray="2.6 1.4"/><path d="M6 4.5H16.5" stroke="#1c7acc" stroke-width="1.3" stroke-dasharray="2.6 1.4"/><circle cx="4.5" cy="14.5" r="2" fill="none" stroke="#1c7acc" stroke-width="1.2"/><path d="M6.5 14.5H17" stroke="#000" stroke-width="1.4"/></svg><svg class="abs" style="left:178px;top:588px" width="20" height="19" viewBox="0 0 20 19" ><path d="M2 10.5H8.2M11.4 10.5H17.5" stroke="#000" stroke-width="1.3"/><path d="M9.5 7.6V13.6" stroke="#000" stroke-width="1.3"/><path d="M10 8L13 5.6L16.6 1.6" stroke="#000" stroke-width="1.1" fill="none"/><path d="M10.6 4.4L13 5.8" stroke="#000" stroke-width="1.1"/></svg><div class="abs" style="left:204px;top:586px;width:12px;height:22px;box-sizing:border-box;background:#dcdcdc;border:1px solid #cacaca"></div><svg class="abs" style="left:207px;top:594px" width="6" height="8" viewBox="0 0 6 8" ><path d="M.6 .4L5 4L.6 7.6Z" fill="#000"/></svg><div class="abs" style="left:221.5px;top:582px;font:bold 12.1px/15px 'DejaVu Sans Condensed','Liberation Sans',sans-serif;letter-spacing:-.1px;color:#000">Half</div><div class="abs" style="left:221.5px;top:597px;font:12.6px/14px 'DejaVu Sans Condensed','Liberation Sans',sans-serif;color:#5c5c5c">2</div><div class="abs" style="left:292px;top:586px;width:12px;height:12px;box-sizing:border-box;background:#dcdcdc;border:1px solid #b4b4b4"></div><svg class="abs" style="left:296px;top:588px" width="6" height="8" viewBox="0 0 6 8" ><path d="M.6 .2L5.2 4L.6 7.8Z" fill="#000"/></svg><div class="abs" style="left:309px;top:582px;width:1px;height:25px;background:#c4c4c4"></div><div class="abs" style="left:316px;top:587px;width:73px;height:21px;box-sizing:border-box;background:#cccccc;border:1px solid #c2c2c2;text-align:center;font:11px/20px 'DejaVu Sans Condensed','Liberation Sans',sans-serif;color:#848484">OK</div><div class="abs" style="left:399px;top:587px;width:73px;height:21px;box-sizing:border-box;background:#cccccc;border:1px solid #c2c2c2;text-align:center;font:11px/20px 'DejaVu Sans Condensed','Liberation Sans',sans-serif;color:#848484">Cancel</div><svg class="abs" style="left:736px;top:568px" width="12" height="12" viewBox="0 0 12 12" ><g fill="#c6c6c6"><rect x="8" y="2" width="2" height="2"/><rect x="5" y="5" width="2" height="2"/><rect x="8" y="5" width="2" height="2"/><rect x="2" y="8" width="2" height="2"/><rect x="5" y="8" width="2" height="2"/><rect x="8" y="8" width="2" height="2"/></g></svg><div id="taskbar"><svg class="abs" style="left:684px;top:14px" width="15" height="12" viewBox="0 0 15 12" ><g stroke="#0e0e0e" stroke-width="1.4" fill="none"><path d="M3.5 3.5V1H14V8.5H11.5"/><rect x=".6" y="3.6" width="10.8" height="7.8"/><path d="M.6 5.6H11.4"/></g></svg><div class="abs" style="left:906px;top:14px;font:11px/14px 'Liberation Sans',sans-serif;color:#343434;white-space:nowrap;letter-spacing:.4px">13.0 GB</div><svg class="abs" style="left:733px;top:10px" width="14" height="9" viewBox="0 0 14 9" ><path d="M1.2 8L7 2L12.8 8" stroke="#fff" stroke-width="1.5" fill="none"/></svg><svg class="abs" style="left:756px;top:10px" width="17" height="11" viewBox="0 0 17 11" ><rect x="1" y="1.6" width="13" height="7.8" fill="none" stroke="#fff" stroke-width="1.3"/><rect x="14" y="4" width="1.8" height="3" fill="#fff"/><rect x="2.8" y="3.4" width="5" height="4.2" fill="#fff"/></svg><svg class="abs" style="left:779px;top:8px" width="18" height="16" viewBox="0 0 18 16" ><g stroke="#fff" stroke-width="1.3" fill="none"><rect x="4.6" y="1.6" width="11.8" height="8.4"/><path d="M10.5 10V13.6M6.5 14H14.5"/><rect x="1" y="1" width="3.4" height="3.4" stroke-width="1"/><path d="M2.7 4.4V11.4H6"/></g></svg><svg class="abs" style="left:803px;top:8px" width="18" height="16" viewBox="0 0 18 16" ><g stroke="#fff" fill="none"><path d="M1.2 5.6H4L8.2 1.8V14.2L4 10.4H1.2Z" stroke-width="1.2"/><path d="M10.4 5.4C11.6 7 11.6 9 10.4 10.6" stroke-width="1.2"/><path d="M12.6 3.4C14.8 6 14.8 10 12.6 12.6" stroke-width="1.1" stroke-opacity=".6"/><path d="M14.8 1.6C17.8 5.4 17.8 10.6 14.8 14.4" stroke-width="1" stroke-opacity=".3"/></g></svg><svg class="abs" style="left:828px;top:7px" width="17" height="17" viewBox="0 0 17 17" ><path d="M.6 .6H16.4V12.4H10.6L8.2 15.6L5.8 12.4H.6Z" fill="#fff"/><path d="M3.2 3.8H13.8M3.2 6.4H13.8M3.2 9H10" stroke="#1f1f1f" stroke-width="1.3"/></svg><div class="abs" style="left:851.5px;top:3.5px;font:18.6px/22px 'Liberation Sans',sans-serif;color:#fff">A</div><div class="abs" style="left:881.5px;top:7px;width:14.5px;height:15.5px;background:#fff;color:#111;font:bold 13.5px/15px 'Noto Sans CJK KR','NanumGothic',sans-serif;text-align:center;overflow:hidden">한</div><div class="abs" style="left:922.5px;top:5px;font:12.2px/16px 'Liberation Sans','Noto Sans CJK KR','NanumGothic',sans-serif;color:#fff;white-space:nowrap;letter-spacing:.05px">오전 10:25</div><div class="abs" style="left:994px;top:0;width:1px;height:29px;background:#5a5a5a"></div></div>
</div>
</body></html>
